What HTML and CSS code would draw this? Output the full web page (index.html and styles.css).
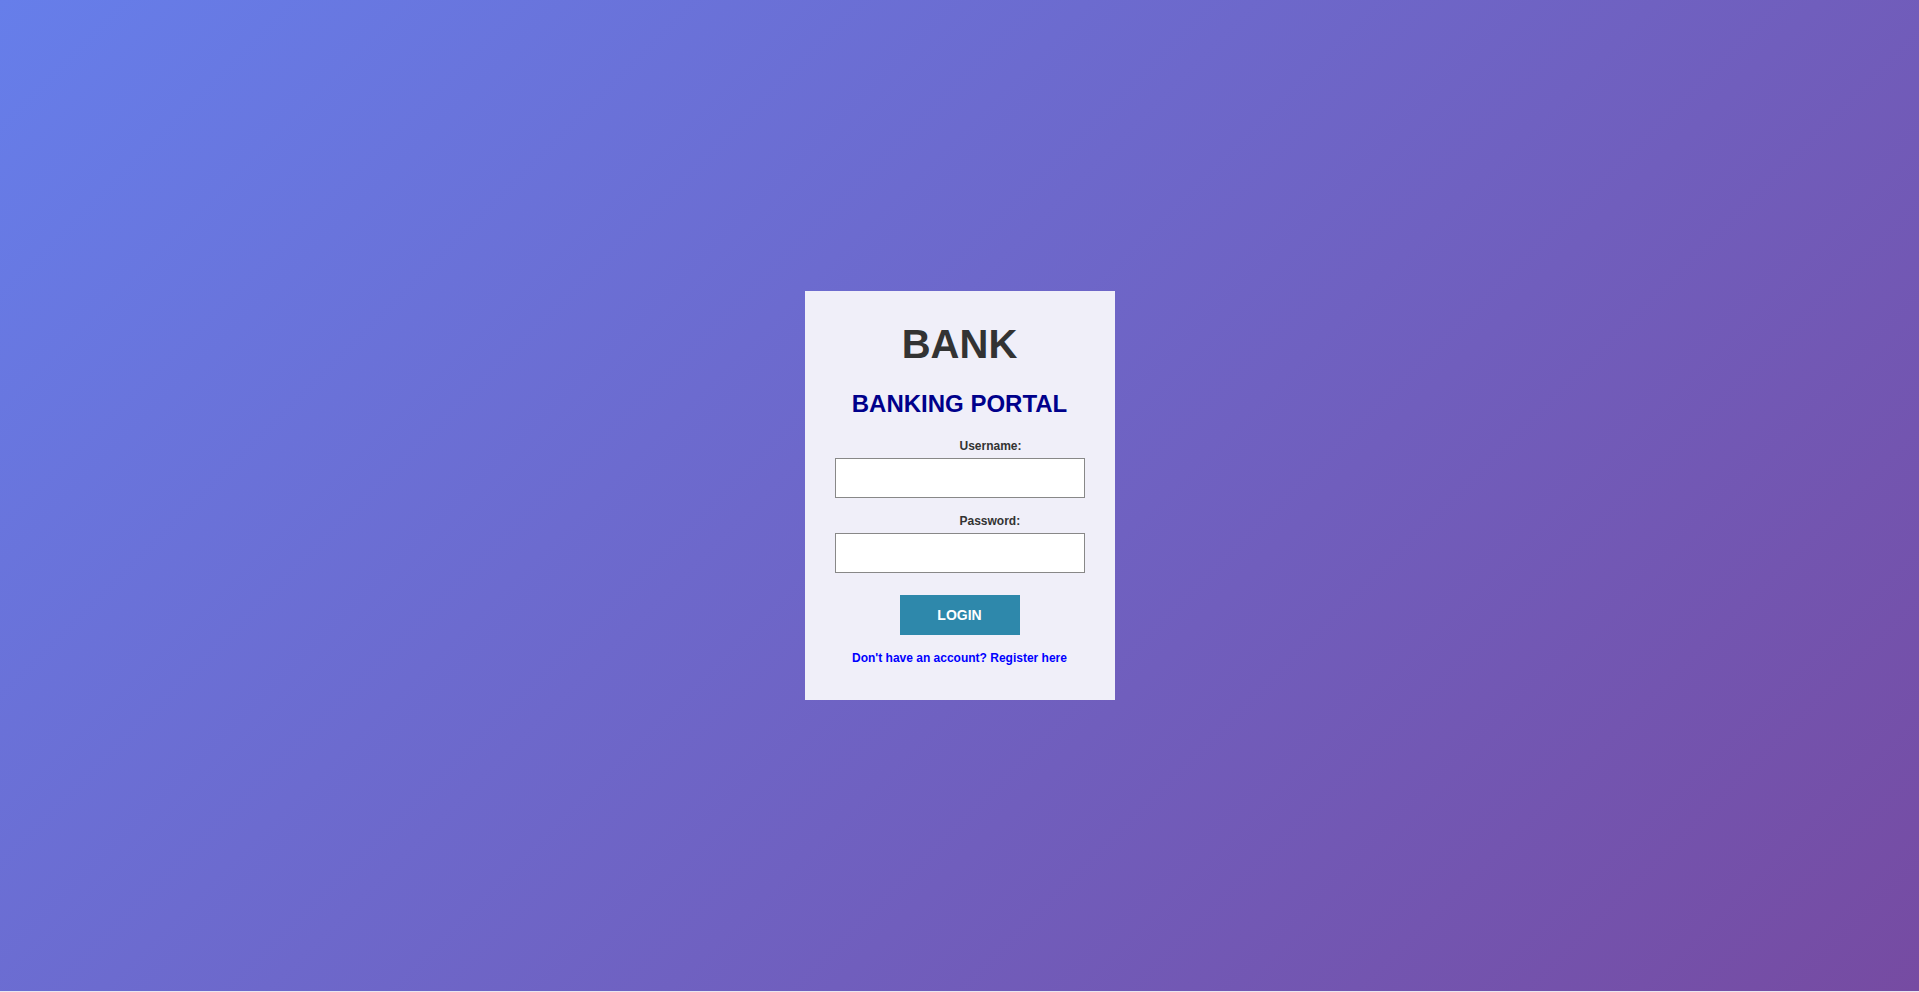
FILE: index.html
```html
<!DOCTYPE html>
<html lang="en">
<head>
<meta charset="utf-8">
<title>Banking Portal</title>
<link rel="stylesheet" href="styles.css">
</head>
<body>
<div class="page">
  <div class="card">
    <h1 class="logo">BANK</h1>
    <h2 class="title">BANKING PORTAL</h2>
    <form class="form">
      <label class="label" for="username">Username:</label>
      <input class="input" id="username" type="text">
      <label class="label label-pw" for="password">Password:</label>
      <input class="input" id="password" type="password">
      <button class="btn" type="button">LOGIN</button>
    </form>
    <a class="register" href="#">Don't have an account? Register here</a>
  </div>
</div>
</body>
</html>
```
FILE: styles.css
```css
html {
  background: #e8e8f0;
}
body {
  margin: 0;
  font-family: "Liberation Sans", Arial, sans-serif;
}
.page {
  height: calc(100vh - 1px);
  background: linear-gradient(135deg, #667eea 0%, #764ba2 100%);
  display: flex;
  align-items: center;
  justify-content: center;
}
.card {
  width: 250px;
  height: 379px;
  padding: 30px 30px 0;
  background: #f0eff9;
  display: flex;
  flex-direction: column;
  align-items: center;
}
.logo {
  margin: 0;
  font-size: 40px;
  font-weight: bold;
  color: #333;
  line-height: 46px;
}
.title {
  margin: 23px 0 0;
  font-size: 24px;
  font-weight: bold;
  color: #00008b;
  line-height: 28px;
}
.form {
  margin-top: 21px;
  width: 250px;
  display: flex;
  flex-direction: column;
  align-items: center;
}
.label {
  align-self: stretch;
  padding-left: 125px;
  font-size: 12px;
  font-weight: bold;
  color: #333;
  line-height: 14px;
}
.label-pw {
  margin-top: 16px;
}
.input {
  box-sizing: border-box;
  margin: 5px 0 0;
  width: 250px;
  height: 40px;
  border: 1px solid #888;
  background: #fff;
  padding: 0 8px;
}
.btn {
  margin-top: 22px;
  width: 120px;
  height: 40px;
  border: none;
  background: #2e88ab;
  color: #fff;
  font-family: "Liberation Sans", Arial, sans-serif;
  font-size: 14px;
  font-weight: bold;
  cursor: pointer;
}
.register {
  margin-top: 16px;
  font-size: 12px;
  font-weight: bold;
  color: #0000ff;
  text-decoration: none;
  line-height: 14px;
}
```
